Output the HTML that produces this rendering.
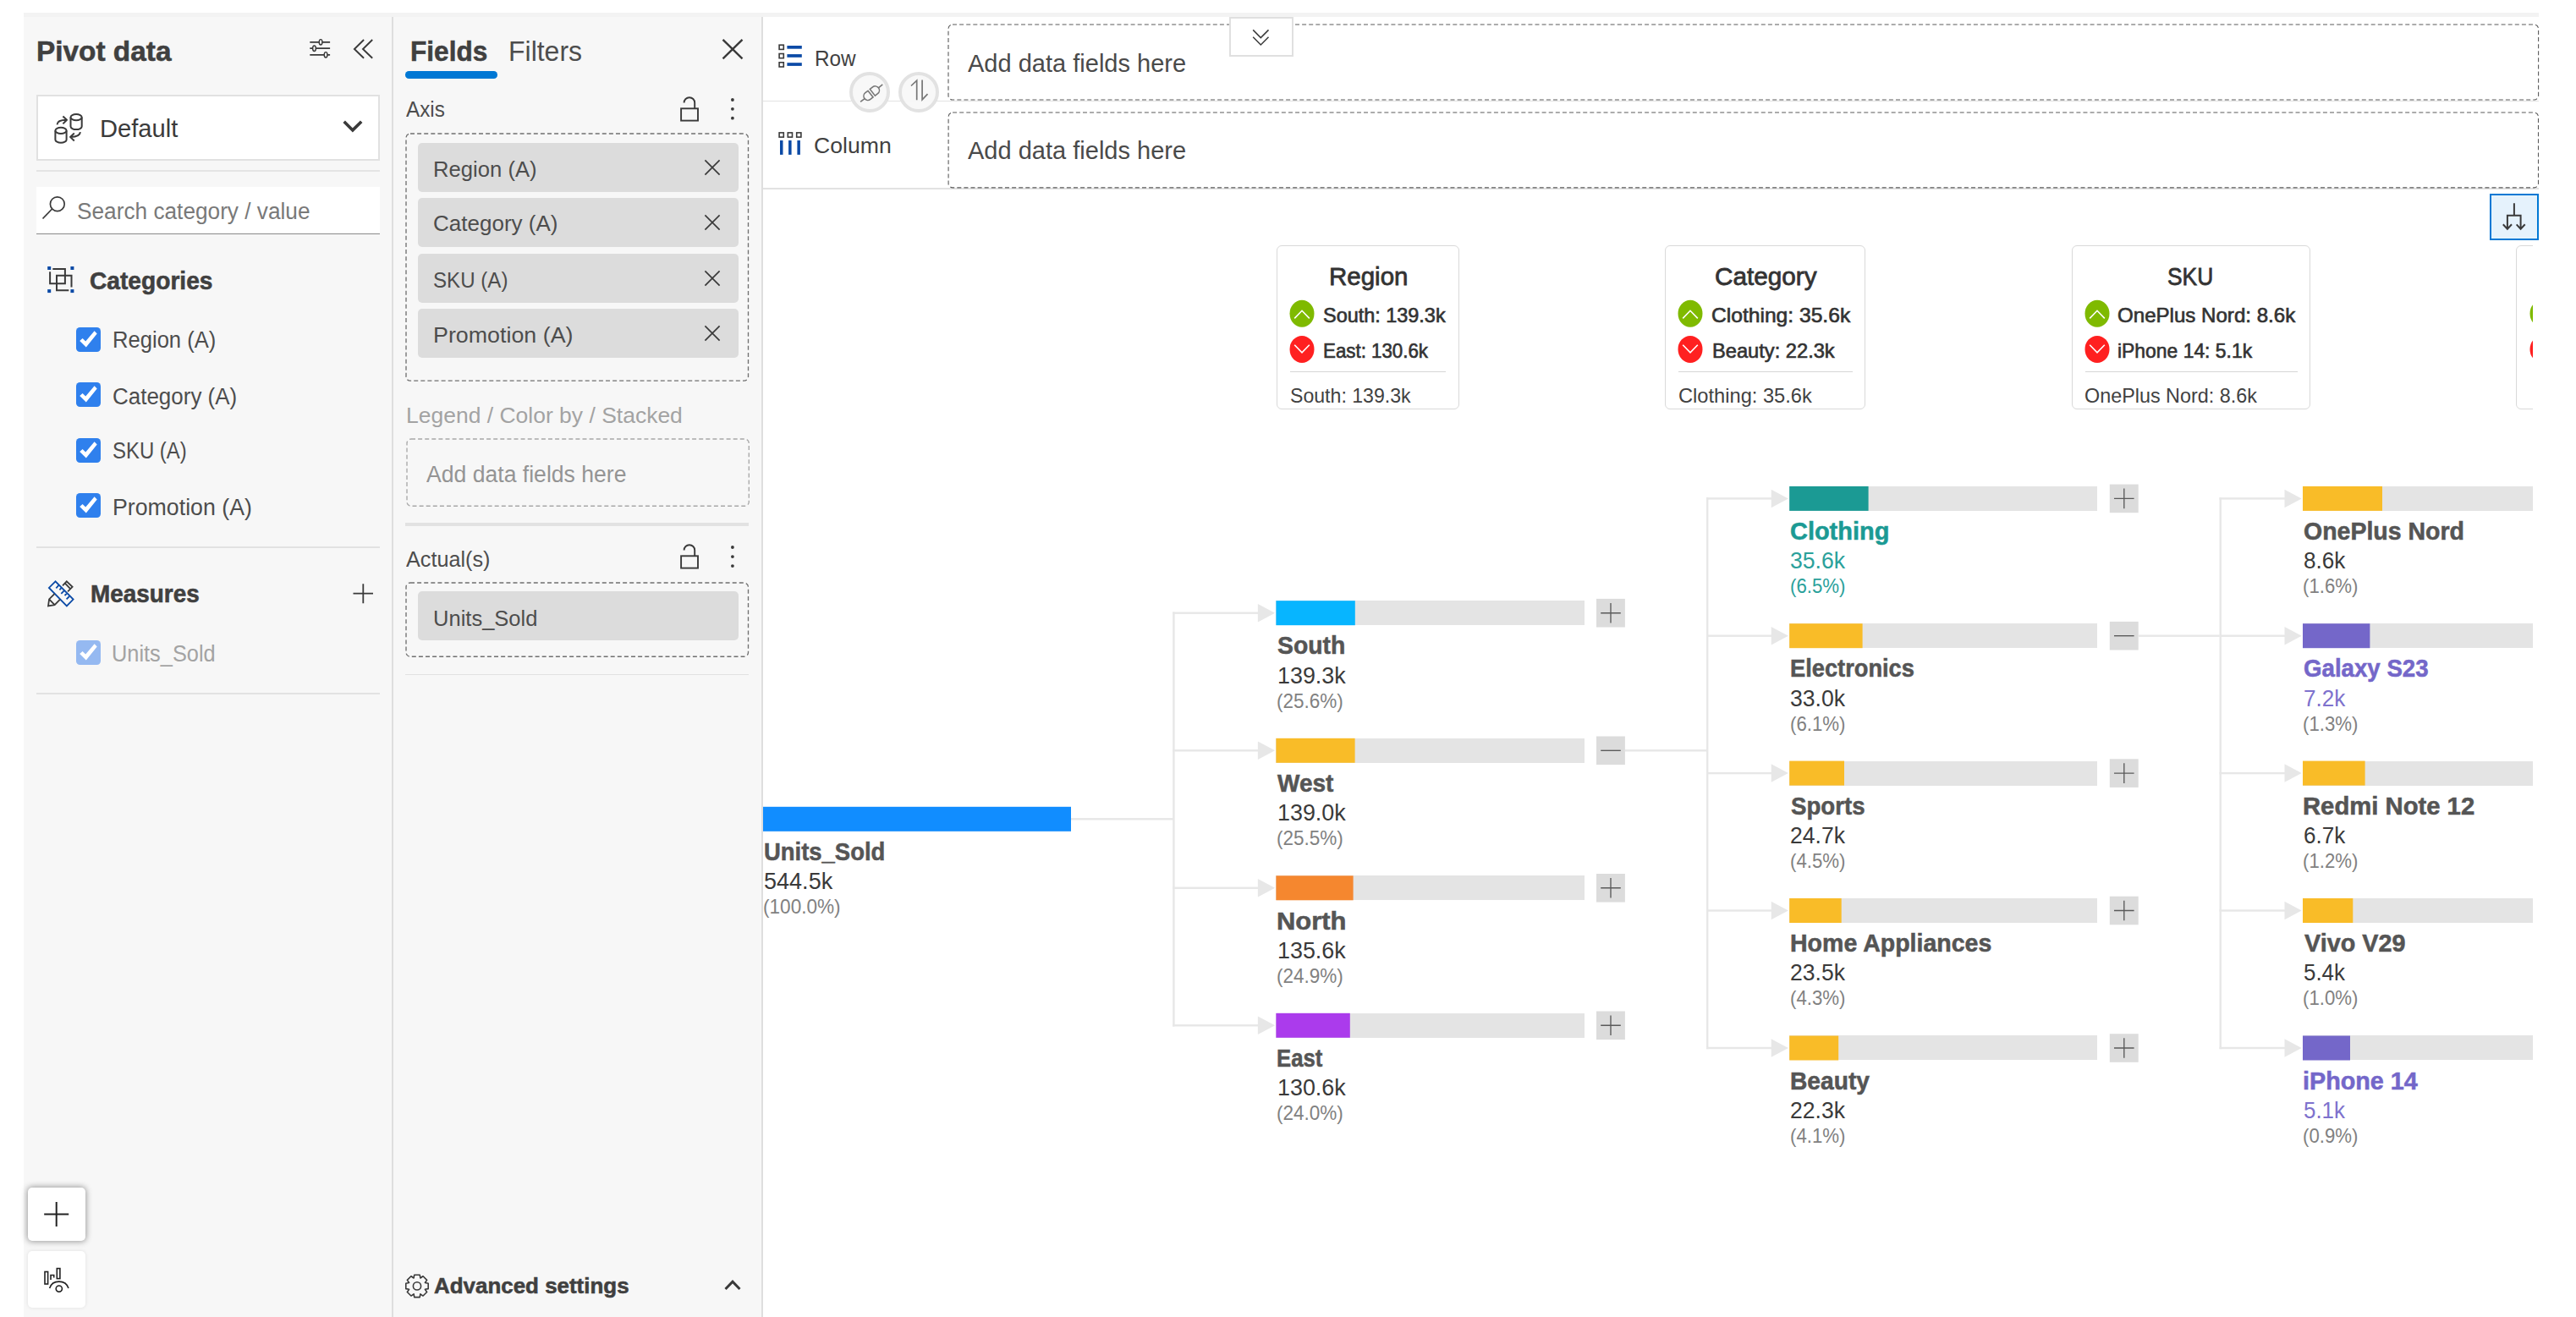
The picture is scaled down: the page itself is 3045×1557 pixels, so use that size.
<!DOCTYPE html>
<html><head><meta charset="utf-8"><title>Pivot</title>
<style>
html,body{margin:0;padding:0;background:#fff;}
body{width:3045px;height:1557px;position:relative;overflow:hidden;font-family:"Liberation Sans", sans-serif;}
.a{position:absolute;box-sizing:border-box;}
.t{position:absolute;white-space:pre;line-height:normal;transform-origin:0 0;font-family:"Liberation Sans", sans-serif;}
svg{overflow:visible;}
</style></head><body>
<div class="a" style="left:28px;top:15px;width:2973px;height:5px;background:#f3f3f3;"></div>
<div class="a" style="left:28px;top:20px;width:873px;height:1537px;background:#f7f7f7;"></div>
<div class="a" style="left:463px;top:20px;width:2px;height:1537px;background:#dedede;"></div>
<div class="a" style="left:900px;top:20px;width:2px;height:1537px;background:#dedede;"></div>
<svg class="a" style="left:360px;top:40px;" width="40" height="35" viewBox="360 40 40 35"><g stroke="#3a3a3a" stroke-width="1.75" fill="none"><path d="M366.3 49.8H390.1M366.3 57.2H390.1M366.3 64.8H390.1"/>
<g fill="#f7f7f7" stroke-width="1.45"><ellipse cx="379.1" cy="49.8" rx="1.85" ry="3.2"/><ellipse cx="371.5" cy="57.2" rx="1.85" ry="3.2"/><ellipse cx="385.1" cy="64.8" rx="1.85" ry="3.2"/></g></g></svg>
<svg class="a" style="left:410px;top:40px;" width="40" height="35" viewBox="410 40 40 35"><g stroke="#3a3a3a" stroke-width="1.9" fill="none"><path d="M430.1 47L418.9 58L430.1 68.8M440.2 47L429 58L440.2 68.8"/></g></svg>
<div class="a" style="left:43px;top:112px;width:406px;height:77.5px;background:#fff;border:2px solid #e1e1e1;"></div>
<svg class="a" style="left:60px;top:130px;" width="45" height="45" viewBox="60 130 45 45"><g stroke="#3a3a3a" stroke-width="2" fill="none" stroke-linejoin="round">
<ellipse cx="90.1" cy="138.7" rx="6.6" ry="3.6"/><path d="M83.5 138.7V149.5A6.6 3.6 0 0 0 96.7 149.5V138.7"/>
<ellipse cx="72" cy="154.4" rx="6.6" ry="3.6"/><path d="M65.4 154.4V165.2A6.6 3.6 0 0 0 78.6 165.2V154.4"/>
<path d="M67.5 147.3C67.8 143.5 71 141.8 78.5 141.8M74.4 137.5L79 141.8L74.4 146.4"/>
<path d="M94.9 156.2C94.6 160 91 161.9 83.6 161.9M87.8 157.6L83 161.9L87.8 166.5"/></g></svg>
<svg class="a" style="left:400px;top:138px;" width="35" height="22" viewBox="400 138 35 22"><path d="M406.7 143.7L416.9 153.9L427.2 143.7" stroke="#3a3a3a" stroke-width="3.6" fill="none"/></svg>
<div class="a" style="left:43px;top:200.5px;width:406px;height:2px;background:#e4e4e4;"></div>
<div class="a" style="left:43px;top:221px;width:406px;height:56px;background:#fff;border-bottom:1.5px solid #8a8a8a;"></div>
<svg class="a" style="left:48px;top:230px;" width="32" height="32" viewBox="48 230 32 32"><g stroke="#3a3a3a" stroke-width="1.7" fill="none"><circle cx="67.8" cy="241.2" r="8.4"/><path d="M61.6 247L50.5 258.5"/></g></svg>
<svg class="a" style="left:54px;top:313px;" width="36" height="36" viewBox="54 313 36 36"><g fill="#0b4aa6"><rect x="56.2" y="315" width="4" height="4"/><rect x="83.4" y="315" width="4" height="4"/><rect x="56.2" y="342.1" width="4" height="4"/><rect x="83.4" y="342.1" width="4" height="4"/></g>
<g stroke="#3a3a3a" stroke-width="2" fill="none"><path d="M62.3 317.9H76.9V335.2H59.1V321.3"/><path d="M84.5 339.6V325.7H67V343.2H81.3"/></g></svg>
<svg class="a" style="left:89.7px;top:386.8px" width="29" height="29" viewBox="0 0 29 29"><rect width="29" height="29" rx="4.5" fill="#2f80ed"/><path d="M4.2 16.1L7.6 13.1L11.2 16.5L21.6 4.3L24.7 7.4L11.8 23.5Z" fill="#fff"/></svg>
<svg class="a" style="left:89.7px;top:452.0px" width="29" height="29" viewBox="0 0 29 29"><rect width="29" height="29" rx="4.5" fill="#2f80ed"/><path d="M4.2 16.1L7.6 13.1L11.2 16.5L21.6 4.3L24.7 7.4L11.8 23.5Z" fill="#fff"/></svg>
<svg class="a" style="left:89.7px;top:517.8px" width="29" height="29" viewBox="0 0 29 29"><rect width="29" height="29" rx="4.5" fill="#2f80ed"/><path d="M4.2 16.1L7.6 13.1L11.2 16.5L21.6 4.3L24.7 7.4L11.8 23.5Z" fill="#fff"/></svg>
<svg class="a" style="left:89.7px;top:582.8px" width="29" height="29" viewBox="0 0 29 29"><rect width="29" height="29" rx="4.5" fill="#2f80ed"/><path d="M4.2 16.1L7.6 13.1L11.2 16.5L21.6 4.3L24.7 7.4L11.8 23.5Z" fill="#fff"/></svg>
<div class="a" style="left:43px;top:646px;width:406px;height:1.6px;background:#e2e2e2;"></div>
<svg class="a" style="left:54px;top:684px;" width="36" height="36" viewBox="54 684 36 36"><g stroke="#0b4aa6" stroke-width="1.8" fill="none" stroke-linejoin="miter"><path d="M65.5 687.3L57.9 694.9L78.9 716.4L86.6 708.6Z"/>
<path d="M69.7 691.7L66.3 695.3M72.5 695.1L70.4 697.3M75.8 698.4L72.3 701.8M78.8 701.8L76.5 704M82 705L78.6 708.4"/></g>
<g stroke="#3a3a3a" stroke-width="1.8" fill="none"><path d="M64.4 702.2L58.1 708.4L57 716.4L64.6 715.1L70.8 708.8M58.1 708.4L64.6 715.1"/>
<path d="M74 692.3L78.8 687.3L85.6 693.8L80.1 699.3M76.9 689.7L83.2 696.2"/></g></svg>
<svg class="a" style="left:415px;top:688px;" width="30" height="28" viewBox="415 688 30 28"><path d="M417.5 701.7H441M429.3 690.3V713.2" stroke="#3a3a3a" stroke-width="1.8" fill="none"/></svg>
<svg class="a" style="left:89.7px;top:757.3px" width="29" height="29" viewBox="0 0 29 29"><rect width="29" height="29" rx="4.5" fill="#95b9f1"/><path d="M4.2 16.1L7.6 13.1L11.2 16.5L21.6 4.3L24.7 7.4L11.8 23.5Z" fill="#fff"/></svg>
<div class="a" style="left:43px;top:819px;width:406px;height:1.6px;background:#e2e2e2;"></div>
<div class="a" style="left:33.2px;top:1404px;width:67.4px;height:63px;background:#fff;border-radius:5px;box-shadow:0 0 7px 1px rgba(0,0,0,0.38);"></div>
<svg class="a" style="left:50px;top:1418px;" width="34" height="34" viewBox="50 1418 34 34"><path d="M52.2 1435.5H81.2M66.7 1421V1450" stroke="#222" stroke-width="2" fill="none"/></svg>
<div class="a" style="left:33.2px;top:1479.2px;width:67.6px;height:67px;background:#fff;border-radius:5px;box-shadow:0 0 4px 0 rgba(0,0,0,0.10);"></div>
<svg class="a" style="left:50px;top:1497px;" width="34" height="34" viewBox="50 1497 34 34"><g stroke="#222" stroke-width="1.6" fill="none"><rect x="53" y="1503.5" width="3.6" height="14.5"/><path d="M60 1513V1507.5H63.7V1510.5"/><rect x="67.3" y="1499.6" width="3.6" height="12"/>
<path d="M58.6 1523C62 1512.5 77.5 1512.5 81 1523"/><circle cx="69.8" cy="1523.6" r="3.6"/></g></svg>
<div class="a" style="left:479.3px;top:84.4px;width:108.8px;height:8.6px;background:#0078d4;border-radius:4.3px;"></div>
<svg class="a" style="left:850px;top:44px;" width="32" height="30" viewBox="850 44 32 30"><path d="M854.5 46.8L877.5 69.4M877.5 46.8L854.5 69.4" stroke="#3a3a3a" stroke-width="2.4" fill="none"/></svg>
<svg class="a" style="left:800px;top:112.8px" width="30" height="34" viewBox="800 112.8 30 34"><g stroke="#3a3a3a" stroke-width="1.9" fill="none"><rect x="805.1" y="128.1" width="19.9" height="14.3"/><path d="M808.6 121.3A6.3 6.3 0 0 1 821.2 121.3V128.1"/></g></svg>
<svg class="a" style="left:860px;top:113.7px" width="12" height="30" viewBox="860 113.7 12 30"><g fill="#3a3a3a"><circle cx="865.9" cy="117.7" r="1.9"/><circle cx="865.9" cy="128.5" r="1.9"/><circle cx="865.9" cy="139.4" r="1.9"/></g></svg>
<svg class="a" style="left:479.3px;top:157.3px" width="406.5" height="294.2" viewBox="479.3 157.3 406.5 294.2"><rect x="480.3" y="158.3" width="404.5" height="292.2" rx="5" fill="none" stroke="#707070" stroke-width="1.35" stroke-dasharray="5 3.1"/></svg>
<div class="a" style="left:494px;top:169px;width:378.5px;height:58px;background:#dcdcdc;border-radius:5px;"></div>
<svg class="a" style="left:829.6px;top:186px" width="24" height="24" viewBox="-12 -12 24 24"><path d="M-8.6 -8.6L8.6 8.6M8.6 -8.6L-8.6 8.6" stroke="#3a3a3a" stroke-width="1.7" fill="none"/></svg>
<div class="a" style="left:494px;top:233.8px;width:378.5px;height:58px;background:#dcdcdc;border-radius:5px;"></div>
<svg class="a" style="left:829.6px;top:250.8px" width="24" height="24" viewBox="-12 -12 24 24"><path d="M-8.6 -8.6L8.6 8.6M8.6 -8.6L-8.6 8.6" stroke="#3a3a3a" stroke-width="1.7" fill="none"/></svg>
<div class="a" style="left:494px;top:299.5px;width:378.5px;height:58px;background:#dcdcdc;border-radius:5px;"></div>
<svg class="a" style="left:829.6px;top:316.5px" width="24" height="24" viewBox="-12 -12 24 24"><path d="M-8.6 -8.6L8.6 8.6M8.6 -8.6L-8.6 8.6" stroke="#3a3a3a" stroke-width="1.7" fill="none"/></svg>
<div class="a" style="left:494px;top:364.5px;width:378.5px;height:58px;background:#dcdcdc;border-radius:5px;"></div>
<svg class="a" style="left:829.6px;top:381.5px" width="24" height="24" viewBox="-12 -12 24 24"><path d="M-8.6 -8.6L8.6 8.6M8.6 -8.6L-8.6 8.6" stroke="#3a3a3a" stroke-width="1.7" fill="none"/></svg>
<svg class="a" style="left:479.5px;top:518px" width="406.3" height="81.3" viewBox="479.5 518 406.3 81.3"><rect x="480.5" y="519" width="404.3" height="79.3" rx="5" fill="none" stroke="#a8a8a8" stroke-width="1.35" stroke-dasharray="5 3.1"/></svg>
<div class="a" style="left:479.4px;top:618px;width:406px;height:3.6px;background:#e2e2e2;"></div>
<svg class="a" style="left:800px;top:641.9px" width="30" height="34" viewBox="800 641.9 30 34"><g stroke="#3a3a3a" stroke-width="1.9" fill="none"><rect x="805.1" y="657.1999999999999" width="19.9" height="14.3"/><path d="M808.6 650.4A6.3 6.3 0 0 1 821.2 650.4V657.1999999999999"/></g></svg>
<svg class="a" style="left:860px;top:642.5px" width="12" height="30" viewBox="860 642.5 12 30"><g fill="#3a3a3a"><circle cx="865.9" cy="646.5" r="1.9"/><circle cx="865.9" cy="657.6" r="1.9"/><circle cx="865.9" cy="668.6" r="1.9"/></g></svg>
<svg class="a" style="left:479.3px;top:688px" width="406.5" height="89.3" viewBox="479.3 688 406.5 89.3"><rect x="480.3" y="689" width="404.5" height="87.3" rx="5" fill="none" stroke="#707070" stroke-width="1.35" stroke-dasharray="5 3.1"/></svg>
<div class="a" style="left:494px;top:699.4px;width:378.5px;height:58px;background:#dcdcdc;border-radius:5px;"></div>
<div class="a" style="left:479.4px;top:796.6px;width:406px;height:1.6px;background:#e2e2e2;"></div>
<svg class="a" style="left:476px;top:1504px;" width="34" height="34" viewBox="476 1504 34 34"><g stroke="#3a3a3a" stroke-width="1.6" fill="none" stroke-linejoin="round"><path d="M506.21 1517.17L506.21 1523.63L502.43 1524.28L502.41 1524.33L504.63 1527.46L500.06 1532.03L496.93 1529.81L496.88 1529.83L496.23 1533.61L489.77 1533.61L489.12 1529.83L489.07 1529.81L485.94 1532.03L481.37 1527.46L483.59 1524.33L483.57 1524.28L479.79 1523.63L479.79 1517.17L483.57 1516.52L483.59 1516.47L481.37 1513.34L485.94 1508.77L489.07 1510.99L489.12 1510.97L489.77 1507.19L496.23 1507.19L496.88 1510.97L496.93 1510.99L500.06 1508.77L504.63 1513.34L502.41 1516.47L502.43 1516.52Z"/><circle cx="493" cy="1520.4" r="4.6"/></g></svg>
<svg class="a" style="left:852px;top:1508px;" width="28" height="22" viewBox="852 1508 28 22"><path d="M857.5 1524L866 1515.2L874.5 1524" stroke="#3a3a3a" stroke-width="3" fill="none"/></svg>
<div class="a" style="left:902px;top:118.6px;width:2099px;height:1.5px;background:#e2e2e2;"></div>
<div class="a" style="left:902px;top:222.2px;width:2099px;height:1.5px;background:#e2e2e2;"></div>
<svg class="a" style="left:918px;top:50px;" width="32" height="32" viewBox="918 50 32 32"><g stroke="#3a3a3a" stroke-width="1.6" fill="none"><rect x="921.1" y="53.2" width="5.2" height="5.2"/><rect x="921.1" y="63.5" width="5.2" height="5.2"/><rect x="921.1" y="73.8" width="5.2" height="5.2"/></g>
<g fill="#0b4aa6"><rect x="930.4" y="54" width="17.4" height="3.7"/><rect x="930.4" y="64.1" width="17.4" height="3.7"/><rect x="930.4" y="74.2" width="17.4" height="3.7"/></g></svg>
<svg class="a" style="left:918px;top:154px;" width="32" height="32" viewBox="918 154 32 32"><g stroke="#3a3a3a" stroke-width="1.6" fill="none"><rect x="921.1" y="156.9" width="5.2" height="5.2"/><rect x="931.3" y="156.9" width="5.2" height="5.2"/><rect x="941.7" y="156.9" width="5.2" height="5.2"/></g>
<g fill="#0b4aa6"><rect x="922" y="166" width="3.5" height="16.9"/><rect x="932.1" y="166" width="3.5" height="16.9"/><rect x="942.4" y="166" width="3.5" height="16.9"/></g></svg>
<svg class="a" style="left:1119.7px;top:27.7px" width="1881.6" height="91" viewBox="1119.7 27.7 1881.6 91"><rect x="1120.7" y="28.7" width="1879.6" height="89" rx="5" fill="none" stroke="#5a5a5a" stroke-width="1.1" stroke-dasharray="5 3.1"/></svg>
<svg class="a" style="left:1119.7px;top:131.5px" width="1881.6" height="90.9" viewBox="1119.7 131.5 1881.6 90.9"><rect x="1120.7" y="132.5" width="1879.6" height="88.9" rx="5" fill="none" stroke="#5a5a5a" stroke-width="1.1" stroke-dasharray="5 3.1"/></svg>
<div class="a" style="left:1003.8px;top:84.9px;width:48px;height:48px;background:rgba(248,248,248,0.93);border:4.2px solid #e2e2e2;border-radius:24px;"></div>
<div class="a" style="left:1062px;top:84.9px;width:48px;height:48px;background:rgba(248,248,248,0.93);border:4.2px solid #e2e2e2;border-radius:24px;"></div>
<svg class="a" style="left:1010px;top:90px;" width="40" height="40" viewBox="1010 90 40 40"><g stroke="#777" stroke-width="1.6" fill="none" transform="translate(1030.2 110.2) rotate(-38)">
<path d="M-16.6 0H-10.4M10.4 0H16.6"/><path d="M-1.5 -4.9H-5.5A4.9 4.9 0 0 0 -5.5 4.9H-1.5Z"/><path d="M1.5 -4.9H5.5A4.9 4.9 0 0 1 5.5 4.9H1.5Z"/></g></svg>
<svg class="a" style="left:1070px;top:90px;" width="34" height="34" viewBox="1070 90 34 34"><g stroke="#777" stroke-width="1.7" fill="none"><path d="M1083.7 118.2V95.2L1077 101.5M1090.1 94.4V117.9L1096.5 111.1"/></g></svg>
<div class="a" style="left:1453.3px;top:20.1px;width:75.5px;height:46.7px;background:#fff;border:2px solid #e0e0e0;"></div>
<svg class="a" style="left:1478px;top:32px;" width="26" height="24" viewBox="1478 32 26 24"><path d="M1481.2 35.4L1490.3 44.6L1499.5 35.4M1481.2 43.8L1490.3 53L1499.5 43.8" stroke="#3a3a3a" stroke-width="1.5" fill="none"/></svg>
<div class="a" style="left:2943.1px;top:228.5px;width:58px;height:55px;background:#e5f2fc;border:2px solid #0078d4;"></div>
<svg class="a" style="left:2955px;top:238px;" width="34" height="36" viewBox="2955 238 34 36"><path d="M2971.9 240.2V254.7M2963.9 270.4V254.7H2979.6V270.4M2958.8 265.3L2963.9 270.7L2969 265.3M2974.7 265.3L2979.6 270.7L2984.7 265.3" stroke="#3a3a3a" stroke-width="2" fill="none"/></svg>
<div class="a" style="left:1509.3px;top:290.4px;width:215.5px;height:193.4px;background:#fff;border:1.7px solid #d9d9d9;border-radius:6px;"></div>
<svg class="a" style="left:1523.3px;top:353px" width="32" height="78" viewBox="-16 353 32 78"><ellipse cx="0" cy="370.7" rx="14.5" ry="16" fill="#7fba00"/><ellipse cx="0" cy="412.9" rx="14.5" ry="16" fill="#ff2020"/><path d="M-8.8 376.4L0 367.3L8.8 376.4M-8.8 407.7L0 416.8L8.8 407.7" stroke="#fff" stroke-width="1.6" fill="none"/></svg>
<div class="a" style="left:1524.7px;top:438.8px;width:184.7px;height:1.6px;background:#d6d6d6;"></div>
<div class="a" style="left:1968.4px;top:290.4px;width:237px;height:193.4px;background:#fff;border:1.7px solid #d9d9d9;border-radius:6px;"></div>
<svg class="a" style="left:1982.4px;top:353px" width="32" height="78" viewBox="-16 353 32 78"><ellipse cx="0" cy="370.7" rx="14.5" ry="16" fill="#7fba00"/><ellipse cx="0" cy="412.9" rx="14.5" ry="16" fill="#ff2020"/><path d="M-8.8 376.4L0 367.3L8.8 376.4M-8.8 407.7L0 416.8L8.8 407.7" stroke="#fff" stroke-width="1.6" fill="none"/></svg>
<div class="a" style="left:1983.8000000000002px;top:438.8px;width:206.2px;height:1.6px;background:#d6d6d6;"></div>
<div class="a" style="left:2449.3px;top:290.4px;width:281.8px;height:193.4px;background:#fff;border:1.7px solid #d9d9d9;border-radius:6px;"></div>
<svg class="a" style="left:2463.3px;top:353px" width="32" height="78" viewBox="-16 353 32 78"><ellipse cx="0" cy="370.7" rx="14.5" ry="16" fill="#7fba00"/><ellipse cx="0" cy="412.9" rx="14.5" ry="16" fill="#ff2020"/><path d="M-8.8 376.4L0 367.3L8.8 376.4M-8.8 407.7L0 416.8L8.8 407.7" stroke="#fff" stroke-width="1.6" fill="none"/></svg>
<div class="a" style="left:2464.7000000000003px;top:438.8px;width:251.0px;height:1.6px;background:#d6d6d6;"></div>
<div class="a" style="left:2973.6px;top:290.2px;width:20.3px;height:193.6px;overflow:hidden"><div class="a" style="left:0;top:0;width:200px;height:193.6px;border:1.7px solid #d9d9d9;border-radius:6px;background:#fff"></div><svg class="a" style="left:15.2px;top:62.8px" width="32" height="78" viewBox="-16 353 32 78"><ellipse cx="0" cy="370.7" rx="14.5" ry="16" fill="#7fba00"/><ellipse cx="0" cy="412.9" rx="14.5" ry="16" fill="#ff2020"/></svg></div>
<svg class="a" style="left:902px;top:500px;overflow:hidden" width="2091.8" height="900" viewBox="902 500 2091.8 900"><rect x="902" y="953.8" width="364.3" height="29" fill="#e4e4e4" shape-rendering="crispEdges"/><rect x="902" y="953.8" width="364" height="29" fill="#118dff"/><rect x="1266" y="967.0999999999999" width="121.6" height="2.4" fill="#e7e7e7"/><rect x="1386.2" y="723.5" width="2.4" height="489.9999999999999" fill="#e7e7e7"/><rect x="1386.2" y="723.5" width="102.20000000000005" height="2.4" fill="#e7e7e7"/><path d="M1486.9 713.95L1507.1000000000001 724.7L1486.9 735.45Z" fill="#e7e7e7"/><rect x="1508.4" y="710.2" width="364.3" height="29" fill="#e4e4e4" shape-rendering="crispEdges"/><rect x="1508.4" y="710.2" width="93.4" height="29" fill="#07b5ff"/><rect x="1887.0" y="707.9000000000001" width="33.9" height="33.6" fill="#dcdcdc"/><path d="M1892.2 724.7H1915.8M1904.0 712.9000000000001V736.5" stroke="#5a5a5a" stroke-width="1.35" fill="none"/><rect x="1386.2" y="886.0999999999999" width="102.20000000000005" height="2.4" fill="#e7e7e7"/><path d="M1486.9 876.55L1507.1000000000001 887.3L1486.9 898.05Z" fill="#e7e7e7"/><rect x="1508.4" y="872.8" width="364.3" height="29" fill="#e4e4e4" shape-rendering="crispEdges"/><rect x="1508.4" y="872.8" width="93.2" height="29" fill="#f9bc28"/><rect x="1887.0" y="870.5" width="33.9" height="33.6" fill="#dcdcdc"/><path d="M1892.2 887.3H1915.8" stroke="#5a5a5a" stroke-width="1.35" fill="none"/><rect x="1386.2" y="1048.6" width="102.20000000000005" height="2.4" fill="#e7e7e7"/><path d="M1486.9 1039.05L1507.1000000000001 1049.8L1486.9 1060.55Z" fill="#e7e7e7"/><rect x="1508.4" y="1035.3" width="364.3" height="29" fill="#e4e4e4" shape-rendering="crispEdges"/><rect x="1508.4" y="1035.3" width="91.2" height="29" fill="#f5872f"/><rect x="1887.0" y="1033.0" width="33.9" height="33.6" fill="#dcdcdc"/><path d="M1892.2 1049.8H1915.8M1904.0 1038.0V1061.6" stroke="#5a5a5a" stroke-width="1.35" fill="none"/><rect x="1386.2" y="1211.1" width="102.20000000000005" height="2.4" fill="#e7e7e7"/><path d="M1486.9 1201.55L1507.1000000000001 1212.3L1486.9 1223.05Z" fill="#e7e7e7"/><rect x="1508.4" y="1197.8" width="364.3" height="29" fill="#e4e4e4" shape-rendering="crispEdges"/><rect x="1508.4" y="1197.8" width="87.4" height="29" fill="#ab3bec"/><rect x="1887.0" y="1195.5" width="33.9" height="33.6" fill="#dcdcdc"/><path d="M1892.2 1212.3H1915.8M1904.0 1200.5V1224.1" stroke="#5a5a5a" stroke-width="1.35" fill="none"/><rect x="1920.9" y="886.0999999999999" width="96.09999999999991" height="2.4" fill="#e7e7e7"/><rect x="2017" y="588.1999999999999" width="2.4" height="652.0" fill="#e7e7e7"/><rect x="2017" y="588.1999999999999" width="78.19999999999982" height="2.4" fill="#e7e7e7"/><path d="M2093.7 578.65L2113.8999999999996 589.4L2093.7 600.15Z" fill="#e7e7e7"/><rect x="2115.2" y="574.9" width="364.3" height="29" fill="#e4e4e4" shape-rendering="crispEdges"/><rect x="2115.2" y="574.9" width="93.4" height="29" fill="#1b9a94"/><rect x="2493.7999999999997" y="572.6" width="33.9" height="33.6" fill="#dcdcdc"/><path d="M2498.9999999999995 589.4H2522.6M2510.7999999999997 577.6V601.1999999999999" stroke="#5a5a5a" stroke-width="1.35" fill="none"/><rect x="2017" y="750.5" width="78.19999999999982" height="2.4" fill="#e7e7e7"/><path d="M2093.7 740.95L2113.8999999999996 751.7L2093.7 762.45Z" fill="#e7e7e7"/><rect x="2115.2" y="737.2" width="364.3" height="29" fill="#e4e4e4" shape-rendering="crispEdges"/><rect x="2115.2" y="737.2" width="86.4" height="29" fill="#f9bc28"/><rect x="2493.7999999999997" y="734.9000000000001" width="33.9" height="33.6" fill="#dcdcdc"/><path d="M2498.9999999999995 751.7H2522.6" stroke="#5a5a5a" stroke-width="1.35" fill="none"/><rect x="2017" y="912.9" width="78.19999999999982" height="2.4" fill="#e7e7e7"/><path d="M2093.7 903.35L2113.8999999999996 914.1L2093.7 924.85Z" fill="#e7e7e7"/><rect x="2115.2" y="899.6" width="364.3" height="29" fill="#e4e4e4" shape-rendering="crispEdges"/><rect x="2115.2" y="899.6" width="64.8" height="29" fill="#f9bc28"/><rect x="2493.7999999999997" y="897.3000000000001" width="33.9" height="33.6" fill="#dcdcdc"/><path d="M2498.9999999999995 914.1H2522.6M2510.7999999999997 902.3000000000001V925.9" stroke="#5a5a5a" stroke-width="1.35" fill="none"/><rect x="2017" y="1075.3" width="78.19999999999982" height="2.4" fill="#e7e7e7"/><path d="M2093.7 1065.75L2113.8999999999996 1076.5L2093.7 1087.25Z" fill="#e7e7e7"/><rect x="2115.2" y="1062.0" width="364.3" height="29" fill="#e4e4e4" shape-rendering="crispEdges"/><rect x="2115.2" y="1062.0" width="61.5" height="29" fill="#f9bc28"/><rect x="2493.7999999999997" y="1059.7" width="33.9" height="33.6" fill="#dcdcdc"/><path d="M2498.9999999999995 1076.5H2522.6M2510.7999999999997 1064.7V1088.3" stroke="#5a5a5a" stroke-width="1.35" fill="none"/><rect x="2017" y="1237.8" width="78.19999999999982" height="2.4" fill="#e7e7e7"/><path d="M2093.7 1228.25L2113.8999999999996 1239L2093.7 1249.75Z" fill="#e7e7e7"/><rect x="2115.2" y="1224.5" width="364.3" height="29" fill="#e4e4e4" shape-rendering="crispEdges"/><rect x="2115.2" y="1224.5" width="58" height="29" fill="#f9bc28"/><rect x="2493.7999999999997" y="1222.2" width="33.9" height="33.6" fill="#dcdcdc"/><path d="M2498.9999999999995 1239H2522.6M2510.7999999999997 1227.2V1250.8" stroke="#5a5a5a" stroke-width="1.35" fill="none"/><rect x="2527.7" y="750.5" width="95.80000000000018" height="2.4" fill="#e7e7e7"/><rect x="2623.5" y="588.1999999999999" width="2.4" height="652.0" fill="#e7e7e7"/><rect x="2623.5" y="588.1999999999999" width="78.5" height="2.4" fill="#e7e7e7"/><path d="M2700.5 578.65L2720.7 589.4L2700.5 600.15Z" fill="#e7e7e7"/><rect x="2722" y="574.9" width="364.3" height="29" fill="#e4e4e4" shape-rendering="crispEdges"/><rect x="2722" y="574.9" width="94" height="29" fill="#f9bc28"/><rect x="2623.5" y="750.5" width="78.5" height="2.4" fill="#e7e7e7"/><path d="M2700.5 740.95L2720.7 751.7L2700.5 762.45Z" fill="#e7e7e7"/><rect x="2722" y="737.2" width="364.3" height="29" fill="#e4e4e4" shape-rendering="crispEdges"/><rect x="2722" y="737.2" width="79.4" height="29" fill="#7467c9"/><rect x="2623.5" y="912.9" width="78.5" height="2.4" fill="#e7e7e7"/><path d="M2700.5 903.35L2720.7 914.1L2700.5 924.85Z" fill="#e7e7e7"/><rect x="2722" y="899.6" width="364.3" height="29" fill="#e4e4e4" shape-rendering="crispEdges"/><rect x="2722" y="899.6" width="73.6" height="29" fill="#f9bc28"/><rect x="2623.5" y="1075.3" width="78.5" height="2.4" fill="#e7e7e7"/><path d="M2700.5 1065.75L2720.7 1076.5L2700.5 1087.25Z" fill="#e7e7e7"/><rect x="2722" y="1062.0" width="364.3" height="29" fill="#e4e4e4" shape-rendering="crispEdges"/><rect x="2722" y="1062.0" width="59.3" height="29" fill="#f9bc28"/><rect x="2623.5" y="1237.8" width="78.5" height="2.4" fill="#e7e7e7"/><path d="M2700.5 1228.25L2720.7 1239L2700.5 1249.75Z" fill="#e7e7e7"/><rect x="2722" y="1224.5" width="364.3" height="29" fill="#e4e4e4" shape-rendering="crispEdges"/><rect x="2722" y="1224.5" width="56" height="29" fill="#7467c9"/></svg>
<span class="t" style="left:43.13px;top:41.00px;font-size:33.8px;color:#404040;transform:scaleX(0.9875);font-weight:bold;-webkit-text-stroke:0.55px #404040;">Pivot data</span>
<span class="t" style="left:117.52px;top:135.00px;font-size:29.4px;color:#3b3b3b;transform:scaleX(0.9917);">Default</span>
<span class="t" style="left:91.03px;top:235.00px;font-size:27px;color:#797979;transform:scaleX(0.9714);">Search category / value</span>
<span class="t" style="left:105.82px;top:316.00px;font-size:28.8px;color:#404040;transform:scaleX(0.9774);font-weight:bold;-webkit-text-stroke:0.55px #404040;">Categories</span>
<span class="t" style="left:132.60px;top:387.00px;font-size:27px;color:#4d4d4d;transform:scaleX(0.9479);">Region (A)</span>
<span class="t" style="left:132.74px;top:454.00px;font-size:27px;color:#4d4d4d;transform:scaleX(0.9619);">Category (A)</span>
<span class="t" style="left:132.91px;top:518.00px;font-size:27px;color:#4d4d4d;transform:scaleX(0.8864);">SKU (A)</span>
<span class="t" style="left:132.92px;top:585.00px;font-size:27px;color:#4d4d4d;transform:scaleX(0.9899);">Promotion (A)</span>
<span class="t" style="left:107.03px;top:686.00px;font-size:28.8px;color:#404040;transform:scaleX(0.9691);font-weight:bold;-webkit-text-stroke:0.55px #404040;">Measures</span>
<span class="t" style="left:132.34px;top:757.00px;font-size:27.3px;color:#a3a3a3;transform:scaleX(0.9292);">Units_Sold</span>
<span class="t" style="left:484.73px;top:41.00px;font-size:33.8px;color:#404040;transform:scaleX(0.9350);font-weight:bold;-webkit-text-stroke:0.55px #404040;">Fields</span>
<span class="t" style="left:600.91px;top:41.00px;font-size:33.8px;color:#4d4d4d;transform:scaleX(0.9461);">Filters</span>
<span class="t" style="left:480.30px;top:114.00px;font-size:26.4px;color:#4d4d4d;transform:scaleX(0.9202);">Axis</span>
<span class="t" style="left:512.46px;top:185.00px;font-size:26.5px;color:#4d4d4d;transform:scaleX(0.9682);">Region (A)</span>
<span class="t" style="left:512.22px;top:249.00px;font-size:26.5px;color:#4d4d4d;transform:scaleX(0.9819);">Category (A)</span>
<span class="t" style="left:512.29px;top:316.00px;font-size:26.5px;color:#4d4d4d;transform:scaleX(0.9103);">SKU (A)</span>
<span class="t" style="left:512.38px;top:381.00px;font-size:26.5px;color:#4d4d4d;transform:scaleX(1.0122);">Promotion (A)</span>
<span class="t" style="left:479.50px;top:476.00px;font-size:26.5px;color:#a3a3a3;transform:scaleX(0.9994);">Legend / Color by / Stacked</span>
<span class="t" style="left:503.50px;top:546.00px;font-size:27px;color:#949494;transform:scaleX(0.9847);">Add data fields here</span>
<span class="t" style="left:480.30px;top:646.00px;font-size:26.4px;color:#4d4d4d;transform:scaleX(0.9552);">Actual(s)</span>
<span class="t" style="left:512.27px;top:716.00px;font-size:26.5px;color:#4d4d4d;transform:scaleX(0.9632);">Units_Sold</span>
<span class="t" style="left:513.40px;top:1505.00px;font-size:26.2px;color:#404040;transform:scaleX(0.9902);font-weight:bold;-webkit-text-stroke:0.55px #404040;">Advanced settings</span>
<span class="t" style="left:962.83px;top:54.00px;font-size:26px;color:#414141;transform:scaleX(0.9356);">Row</span>
<span class="t" style="left:962.48px;top:157.00px;font-size:26px;color:#414141;transform:scaleX(1.0237);">Column</span>
<span class="t" style="left:1144.40px;top:59.00px;font-size:29.2px;color:#4a4a4a;transform:scaleX(0.9942);">Add data fields here</span>
<span class="t" style="left:1144.40px;top:162.00px;font-size:29.2px;color:#4a4a4a;transform:scaleX(0.9942);">Add data fields here</span>
<span class="t" style="left:1570.83px;top:310.00px;font-size:30px;color:#333;transform:scaleX(0.9827);-webkit-text-stroke:0.8px #333;">Region</span>
<span class="t" style="left:1563.62px;top:359.00px;font-size:24px;color:#333;transform:scaleX(0.9763);-webkit-text-stroke:0.65px #333;">South: 139.3k</span>
<span class="t" style="left:1564.07px;top:401.00px;font-size:24px;color:#333;transform:scaleX(0.9294);-webkit-text-stroke:0.65px #333;">East: 130.6k</span>
<span class="t" style="left:1524.74px;top:454.00px;font-size:24px;color:#414141;transform:scaleX(0.9628);">South: 139.3k</span>
<span class="t" style="left:2026.51px;top:310.00px;font-size:30px;color:#333;transform:scaleX(0.9898);-webkit-text-stroke:0.8px #333;">Category</span>
<span class="t" style="left:2023.27px;top:359.00px;font-size:24px;color:#333;transform:scaleX(1.0256);-webkit-text-stroke:0.65px #333;">Clothing: 35.6k</span>
<span class="t" style="left:2024.11px;top:401.00px;font-size:24px;color:#333;transform:scaleX(0.9859);-webkit-text-stroke:0.65px #333;">Beauty: 22.3k</span>
<span class="t" style="left:1984.41px;top:454.00px;font-size:24px;color:#414141;transform:scaleX(0.9856);">Clothing: 35.6k</span>
<span class="t" style="left:2562.12px;top:310.00px;font-size:30px;color:#333;transform:scaleX(0.8777);-webkit-text-stroke:0.8px #333;">SKU</span>
<span class="t" style="left:2502.50px;top:359.00px;font-size:24px;color:#333;transform:scaleX(1.0036);-webkit-text-stroke:0.65px #333;">OnePlus Nord: 8.6k</span>
<span class="t" style="left:2502.85px;top:401.00px;font-size:24px;color:#333;transform:scaleX(0.9539);-webkit-text-stroke:0.65px #333;">iPhone 14: 5.1k</span>
<span class="t" style="left:2463.93px;top:454.00px;font-size:24px;color:#414141;transform:scaleX(0.9731);">OnePlus Nord: 8.6k</span>
<span class="t" style="left:902.55px;top:991.00px;font-size:29px;color:#555;transform:scaleX(0.9459);font-weight:bold;-webkit-text-stroke:0.55px #555;">Units_Sold</span>
<span class="t" style="left:903.25px;top:1025.00px;font-size:28.4px;color:#3a3a3a;transform:scaleX(0.9524);">544.5k</span>
<span class="t" style="left:902.45px;top:1058.00px;font-size:23.8px;color:#818181;transform:scaleX(0.9489);">(100.0%)</span>
<span class="t" style="left:1509.90px;top:747.00px;font-size:29px;color:#555;transform:scaleX(0.9760);font-weight:bold;-webkit-text-stroke:0.55px #555;">South</span>
<span class="t" style="left:1509.51px;top:782.00px;font-size:28.4px;color:#3a3a3a;transform:scaleX(0.9471);">139.3k</span>
<span class="t" style="left:1508.85px;top:815.00px;font-size:23.8px;color:#818181;transform:scaleX(0.9460);">(25.6%)</span>
<span class="t" style="left:1509.90px;top:910.00px;font-size:29px;color:#555;transform:scaleX(0.9652);font-weight:bold;-webkit-text-stroke:0.55px #555;">West</span>
<span class="t" style="left:1509.51px;top:944.00px;font-size:28.4px;color:#3a3a3a;transform:scaleX(0.9471);">139.0k</span>
<span class="t" style="left:1508.85px;top:977.00px;font-size:23.8px;color:#818181;transform:scaleX(0.9460);">(25.5%)</span>
<span class="t" style="left:1508.83px;top:1073.00px;font-size:29px;color:#555;transform:scaleX(1.0657);font-weight:bold;-webkit-text-stroke:0.55px #555;">North</span>
<span class="t" style="left:1509.51px;top:1107.00px;font-size:28.4px;color:#3a3a3a;transform:scaleX(0.9471);">135.6k</span>
<span class="t" style="left:1508.85px;top:1140.00px;font-size:23.8px;color:#818181;transform:scaleX(0.9460);">(24.9%)</span>
<span class="t" style="left:1509.01px;top:1235.00px;font-size:29px;color:#555;transform:scaleX(0.8861);font-weight:bold;-webkit-text-stroke:0.55px #555;">East</span>
<span class="t" style="left:1509.51px;top:1269.00px;font-size:28.4px;color:#3a3a3a;transform:scaleX(0.9471);">130.6k</span>
<span class="t" style="left:1508.85px;top:1302.00px;font-size:23.8px;color:#818181;transform:scaleX(0.9460);">(24.0%)</span>
<span class="t" style="left:2115.70px;top:612.00px;font-size:29px;color:#1b9a94;transform:scaleX(0.9978);font-weight:bold;-webkit-text-stroke:0.55px #1b9a94;">Clothing</span>
<span class="t" style="left:2115.96px;top:646.00px;font-size:28.4px;color:#2ba19b;transform:scaleX(0.9371);">35.6k</span>
<span class="t" style="left:2115.67px;top:679.00px;font-size:23.8px;color:#2ba19b;transform:scaleX(0.9345);">(6.5%)</span>
<span class="t" style="left:2115.76px;top:774.00px;font-size:29px;color:#555;transform:scaleX(0.9396);font-weight:bold;-webkit-text-stroke:0.55px #555;">Electronics</span>
<span class="t" style="left:2115.96px;top:809.00px;font-size:28.4px;color:#3a3a3a;transform:scaleX(0.9371);">33.0k</span>
<span class="t" style="left:2115.67px;top:842.00px;font-size:23.8px;color:#818181;transform:scaleX(0.9345);">(6.1%)</span>
<span class="t" style="left:2116.70px;top:937.00px;font-size:29px;color:#555;transform:scaleX(0.9535);font-weight:bold;-webkit-text-stroke:0.55px #555;">Sports</span>
<span class="t" style="left:2116.06px;top:971.00px;font-size:28.4px;color:#3a3a3a;transform:scaleX(0.9357);">24.7k</span>
<span class="t" style="left:2115.67px;top:1004.00px;font-size:23.8px;color:#818181;transform:scaleX(0.9345);">(4.5%)</span>
<span class="t" style="left:2115.72px;top:1099.00px;font-size:29px;color:#555;transform:scaleX(0.9838);font-weight:bold;-webkit-text-stroke:0.55px #555;">Home Appliances</span>
<span class="t" style="left:2116.06px;top:1133.00px;font-size:28.4px;color:#3a3a3a;transform:scaleX(0.9357);">23.5k</span>
<span class="t" style="left:2115.67px;top:1166.00px;font-size:23.8px;color:#818181;transform:scaleX(0.9345);">(4.3%)</span>
<span class="t" style="left:2115.73px;top:1262.00px;font-size:29px;color:#555;transform:scaleX(0.9720);font-weight:bold;-webkit-text-stroke:0.55px #555;">Beauty</span>
<span class="t" style="left:2116.06px;top:1296.00px;font-size:28.4px;color:#3a3a3a;transform:scaleX(0.9357);">22.3k</span>
<span class="t" style="left:2115.67px;top:1329.00px;font-size:23.8px;color:#818181;transform:scaleX(0.9345);">(4.1%)</span>
<span class="t" style="left:2722.52px;top:612.00px;font-size:29px;color:#555;transform:scaleX(0.9825);font-weight:bold;-webkit-text-stroke:0.55px #555;">OnePlus Nord</span>
<span class="t" style="left:2722.88px;top:646.00px;font-size:28.4px;color:#3a3a3a;transform:scaleX(0.9202);">8.6k</span>
<span class="t" style="left:2722.47px;top:679.00px;font-size:23.8px;color:#818181;transform:scaleX(0.9330);">(1.6%)</span>
<span class="t" style="left:2722.55px;top:774.00px;font-size:29px;color:#7467c9;transform:scaleX(0.9534);font-weight:bold;-webkit-text-stroke:0.55px #7467c9;">Galaxy S23</span>
<span class="t" style="left:2722.98px;top:809.00px;font-size:28.4px;color:#7e72cd;transform:scaleX(0.9183);">7.2k</span>
<span class="t" style="left:2722.47px;top:842.00px;font-size:23.8px;color:#818181;transform:scaleX(0.9330);">(1.3%)</span>
<span class="t" style="left:2722.49px;top:937.00px;font-size:29px;color:#555;transform:scaleX(1.0085);font-weight:bold;-webkit-text-stroke:0.55px #555;">Redmi Note 12</span>
<span class="t" style="left:2722.98px;top:971.00px;font-size:28.4px;color:#3a3a3a;transform:scaleX(0.9183);">6.7k</span>
<span class="t" style="left:2722.47px;top:1004.00px;font-size:23.8px;color:#818181;transform:scaleX(0.9330);">(1.2%)</span>
<span class="t" style="left:2723.50px;top:1099.00px;font-size:29px;color:#555;transform:scaleX(0.9921);font-weight:bold;-webkit-text-stroke:0.55px #555;">Vivo V29</span>
<span class="t" style="left:2723.29px;top:1133.00px;font-size:28.4px;color:#3a3a3a;transform:scaleX(0.9127);">5.4k</span>
<span class="t" style="left:2722.47px;top:1166.00px;font-size:23.8px;color:#818181;transform:scaleX(0.9330);">(1.0%)</span>
<span class="t" style="left:2721.52px;top:1262.00px;font-size:29px;color:#7467c9;transform:scaleX(0.9914);font-weight:bold;-webkit-text-stroke:0.55px #7467c9;">iPhone 14</span>
<span class="t" style="left:2723.29px;top:1296.00px;font-size:28.4px;color:#7e72cd;transform:scaleX(0.9127);">5.1k</span>
<span class="t" style="left:2722.47px;top:1329.00px;font-size:23.8px;color:#818181;transform:scaleX(0.9330);">(0.9%)</span>
</body></html>
